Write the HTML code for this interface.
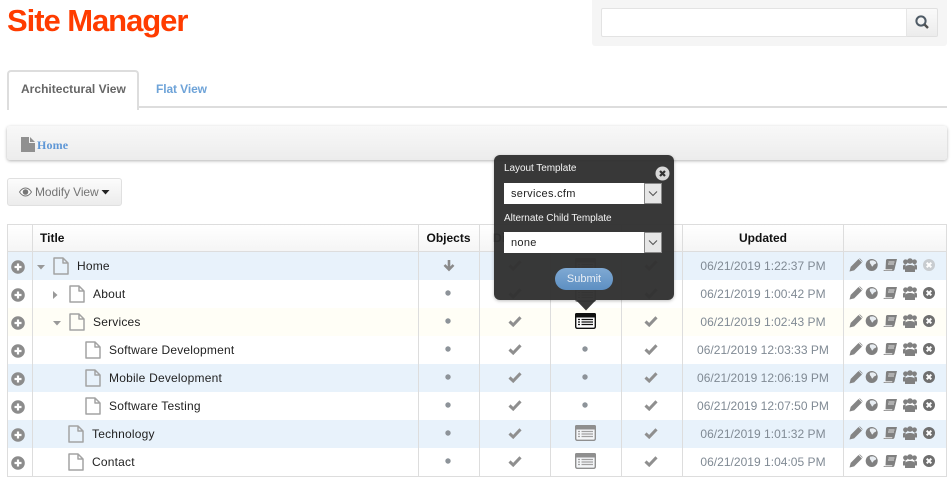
<!DOCTYPE html>
<html><head><meta charset="utf-8">
<style>
html,body{margin:0;padding:0;background:#fff;width:952px;height:485px;overflow:hidden}
body{font-family:"Liberation Sans",Arial,sans-serif;position:relative}
.a{position:absolute}
.t{position:absolute;white-space:nowrap;line-height:16px}
.row{position:absolute;left:8px;width:938px;height:28px}
.v{position:absolute;top:224px;height:252px;width:1px;background:#ddd}
.ti{font-size:12px;color:#222;letter-spacing:.2px}
.dt{font-size:12px;color:#808a94;width:160px;text-align:center;left:683px;letter-spacing:.02px}
.h{font-size:12px;font-weight:bold;color:#111;text-align:center}
svg{position:absolute;overflow:visible}
</style></head><body>
<svg width="0" height="0" style="position:absolute">
<defs>
<symbol id="plus" viewBox="0 0 14 14"><circle cx="7" cy="7" r="6.800" fill="#8c8c8c"/><path d="M7 3.500v7M3.500 7h7" stroke="#fff" stroke-width="2.200"/></symbol>
<symbol id="x" viewBox="0 0 14 14"><circle cx="7" cy="7" r="6" fill="currentColor"/><path d="M4.700 4.700l4.600 4.600M9.300 4.700l-4.600 4.600" stroke="#fff" stroke-width="2"/></symbol>
<symbol id="doc" viewBox="0 0 16 18"><path d="M1 1h9l5 5v11H1zM10 1v5h5" fill="none" stroke="#a3a3a3" stroke-width="1.500" stroke-linejoin="round"/></symbol>
<symbol id="chk" viewBox="0 0 14 12"><path d="M1.500 6.500l3.700 3.500 7.300-7.700" fill="none" stroke="#8f8f8f" stroke-width="3"/></symbol>
<symbol id="tpl" viewBox="0 0 21 16"><rect x=".7" y=".7" width="19.600" height="14.600" rx="1.500" fill="#f4f6f8" stroke="#8f8f8f" stroke-width="1.400"/><rect x="0" y="0" width="21" height="4.500" rx="1.500" fill="#8f8f8f"/><path d="M3 6.500h2M6.500 6.500h11.500M3 9h2M6.500 9h11.500M3 11.500h2M6.500 11.500h11.500" stroke="#a0a0a0" stroke-width="1.200"/></symbol>
<symbol id="tools" viewBox="0 0 76 14"><path d="M1 13l1-4 7.500-7.500 3 3L5 12zM10.500.5l3 3" fill="#858585" stroke="#858585" stroke-width=".7"/><circle cx="22.700" cy="7" r="6" fill="#808080"/><path d="M21 2.800c2.500-1 5.500-.2 6.300 2-.7 1.800-2.300 1-3 2.700-.8 1.500-1.600 1.200-2-.5-.8-1.200-2-1.800-1.300-4.200z" fill="#e8edf2"/><path d="M37 2.500c0-1 .8-1.500 1.500-1.500h9.500l-2.500 10.500c-.3 1-1 1.500-2 1.500h-9c.5-1.500 1-1.500 2-1.500z" fill="#808080"/><path d="M39.500 4h6M39 6h6M35.300 11.800h8" stroke="#fff" stroke-width=".8"/><circle cx="61" cy="3" r="2.800" fill="#808080"/><circle cx="56.500" cy="3.800" r="2.400" fill="#808080"/><circle cx="65.500" cy="3.800" r="2.400" fill="#808080"/><path d="M56 14v-4c0-2 2-3 5-3s5 1 5 3v4z" fill="#808080"/><path d="M54 11.500V8.500c0-1.500.8-2 2.800-2l-.800 5zM68 11.500V8.500c0-1.500-.8-2-2.800-2l.800 5z" fill="#808080"/></symbol>
</defs>
</svg>

<div class="t" style="left:7px;top:1px;font-size:31px;line-height:40px;font-weight:bold;color:#ff3c00;letter-spacing:-1.05px">Site Manager</div>

<div class="a" style="left:592px;top:0;width:355px;height:46px;background:#f5f5f5;border-radius:0 0 3px 3px"></div>
<div class="a" style="left:601px;top:8px;width:304px;height:27px;background:#fff;border:1px solid #e3e3e3;border-radius:2px 0 0 2px"></div>
<div class="a" style="left:906px;top:8px;width:30px;height:27px;background:linear-gradient(#fafafa,#ececec);border:1px solid #e0e0e0;border-left-color:#e6e6e6;border-radius:0 2px 2px 0"></div>
<svg style="left:914px;top:14px" width="16" height="16" viewBox="0 0 16 16"><circle cx="7" cy="7" r="4.600" fill="none" stroke="#4f5b66" stroke-width="2"/><path d="M10.500 10.500l3.500 3.500" stroke="#4f4f4f" stroke-width="2.400"/></svg>

<div class="a" style="left:7px;top:106px;width:940px;height:2px;background:#ddd"></div>
<div class="a" style="left:7px;top:70px;width:128px;height:38px;background:#fff;border:2px solid #ddd;border-bottom:0;border-radius:4px 4px 0 0"></div>
<div class="t" style="left:21px;top:81px;font-size:12px;font-weight:bold;color:#666;letter-spacing:.02px">Architectural View</div>
<div class="t" style="left:156px;top:81px;font-size:12px;font-weight:bold;color:#6ea3d8;letter-spacing:-.1px">Flat View</div>

<div class="a" style="left:7px;top:126px;width:940px;height:34px;background:linear-gradient(#f8f8f8,#ececec);border-radius:3px;box-shadow:0 1px 3px rgba(0,0,0,.3)"></div>
<svg style="left:21px;top:137px" width="14" height="15" viewBox="0 0 14 15"><path d="M0 0h8v6h6v9H0zM9 0l5 5H9z" fill="#909090"/></svg>
<div class="t" style="left:37px;top:137px;font-family:'Liberation Serif',serif;font-size:12px;font-weight:bold;color:#5f97d6;letter-spacing:.15px">Home</div>

<div class="a" style="left:7px;top:178px;width:115px;height:28px;box-sizing:border-box;background:linear-gradient(#fcfcfc,#ececec);border:1px solid #e0e0e0;border-radius:3px"></div>
<svg style="left:19px;top:187px" width="13" height="10" viewBox="0 0 13 10"><path d="M.5 5C2.500 2 4.500 1 6.500 1s4 1 6 4c-2 3-4 4-6 4S2.500 8 .5 5z" fill="#fff" stroke="#777" stroke-width="1"/><circle cx="6.500" cy="5" r="2.800" fill="#777"/></svg>
<div class="t" style="left:35px;top:184px;font-size:12px;color:#747474;letter-spacing:-.08px">Modify View</div>
<svg style="left:101px;top:190px" width="9" height="5"><path d="M.5 0h8L4.500 4.500z" fill="#222"/></svg>

<!-- table -->
<div class="a" style="left:7px;top:224px;width:940px;height:28px;box-sizing:border-box;background:linear-gradient(#fff,#f5f5f5);border-top:1px solid #ddd;border-bottom:1px solid #ddd"></div>
<div class="row" style="top:252px;background:#e8f2fb"></div>
<div class="row" style="top:280px;background:#fff"></div>
<div class="row" style="top:308px;background:#fffef6"></div>
<div class="row" style="top:336px;background:#fff"></div>
<div class="row" style="top:364px;background:#e8f2fb"></div>
<div class="row" style="top:392px;background:#fff"></div>
<div class="row" style="top:420px;background:#e8f2fb"></div>
<div class="row" style="top:448px;background:#fff"></div>
<div class="a" style="left:7px;top:476px;width:940px;height:1px;background:#ddd"></div>

<div class="v" style="left:7px"></div><div class="v" style="left:32px"></div><div class="v" style="left:418px"></div><div class="v" style="left:479px"></div><div class="v" style="left:550px"></div><div class="v" style="left:621px"></div><div class="v" style="left:682px"></div><div class="v" style="left:843px"></div><div class="v" style="left:946px"></div>

<div class="t h" style="left:40px;top:230px">Title</div>
<div class="t h" style="left:418px;width:61px;top:230px">Objects</div>
<div class="t h" style="left:479px;width:71px;top:230px">Display</div>
<div class="t h" style="left:550px;width:71px;top:230px">Template</div>
<div class="t h" style="left:621px;width:61px;top:230px">Nav</div>
<div class="t h" style="left:683px;width:160px;top:230px">Updated</div>

<!-- plus -->
<svg style="left:11px;top:260px" width="14" height="14"><use href="#plus"/></svg>
<svg style="left:11px;top:288px" width="14" height="14"><use href="#plus"/></svg>
<svg style="left:11px;top:316px" width="14" height="14"><use href="#plus"/></svg>
<svg style="left:11px;top:344px" width="14" height="14"><use href="#plus"/></svg>
<svg style="left:11px;top:372px" width="14" height="14"><use href="#plus"/></svg>
<svg style="left:11px;top:400px" width="14" height="14"><use href="#plus"/></svg>
<svg style="left:11px;top:428px" width="14" height="14"><use href="#plus"/></svg>
<svg style="left:11px;top:456px" width="14" height="14"><use href="#plus"/></svg>

<!-- carets -->
<svg style="left:37px;top:265px" width="8" height="5"><path d="M0 0h8L4 4.500z" fill="#999"/></svg>
<svg style="left:53px;top:291px" width="5" height="8"><path d="M0 0v8l4.500-4z" fill="#999"/></svg>
<svg style="left:53px;top:321px" width="8" height="5"><path d="M0 0h8L4 4.500z" fill="#999"/></svg>

<!-- docs -->
<svg style="left:53px;top:257px" width="16" height="18"><use href="#doc"/></svg>
<svg style="left:69px;top:285px" width="16" height="18"><use href="#doc"/></svg>
<svg style="left:69px;top:313px" width="16" height="18"><use href="#doc"/></svg>
<svg style="left:85px;top:341px" width="16" height="18"><use href="#doc"/></svg>
<svg style="left:85px;top:369px" width="16" height="18"><use href="#doc"/></svg>
<svg style="left:85px;top:397px" width="16" height="18"><use href="#doc"/></svg>
<svg style="left:68px;top:425px" width="16" height="18"><use href="#doc"/></svg>
<svg style="left:68px;top:453px" width="16" height="18"><use href="#doc"/></svg>

<div class="t ti" style="left:77px;top:258px">Home</div>
<div class="t ti" style="left:93px;top:286px">About</div>
<div class="t ti" style="left:93px;top:314px">Services</div>
<div class="t ti" style="left:109px;top:342px">Software Development</div>
<div class="t ti" style="left:109px;top:370px">Mobile Development</div>
<div class="t ti" style="left:109px;top:398px">Software Testing</div>
<div class="t ti" style="left:92px;top:426px">Technology</div>
<div class="t ti" style="left:92px;top:454px">Contact</div>

<!-- objects -->
<svg style="left:443px;top:259px" width="12" height="12" viewBox="0 0 12 12"><path d="M6 1v9M1.500 6L6 10.500 10.500 6" fill="none" stroke="#8a8a8a" stroke-width="2.600"/></svg>
<svg style="left:445px;top:290px" width="6" height="6"><circle cx="3" cy="3" r="2.700" fill="#8d9399"/></svg>
<svg style="left:445px;top:318px" width="6" height="6"><circle cx="3" cy="3" r="2.700" fill="#8d9399"/></svg>
<svg style="left:445px;top:346px" width="6" height="6"><circle cx="3" cy="3" r="2.700" fill="#8d9399"/></svg>
<svg style="left:445px;top:374px" width="6" height="6"><circle cx="3" cy="3" r="2.700" fill="#8d9399"/></svg>
<svg style="left:445px;top:402px" width="6" height="6"><circle cx="3" cy="3" r="2.700" fill="#8d9399"/></svg>
<svg style="left:445px;top:430px" width="6" height="6"><circle cx="3" cy="3" r="2.700" fill="#8d9399"/></svg>
<svg style="left:445px;top:458px" width="6" height="6"><circle cx="3" cy="3" r="2.700" fill="#8d9399"/></svg>

<!-- display checks -->
<svg style="left:508px;top:259px" width="14" height="12"><use href="#chk"/></svg>
<svg style="left:508px;top:287px" width="14" height="12"><use href="#chk"/></svg>
<svg style="left:508px;top:315px" width="14" height="12"><use href="#chk"/></svg>
<svg style="left:508px;top:343px" width="14" height="12"><use href="#chk"/></svg>
<svg style="left:508px;top:371px" width="14" height="12"><use href="#chk"/></svg>
<svg style="left:508px;top:399px" width="14" height="12"><use href="#chk"/></svg>
<svg style="left:508px;top:427px" width="14" height="12"><use href="#chk"/></svg>
<svg style="left:508px;top:455px" width="14" height="12"><use href="#chk"/></svg>

<!-- template -->
<svg style="left:575px;top:258px" width="21" height="16"><use href="#tpl"/></svg>
<svg style="left:575px;top:286px" width="21" height="16"><use href="#tpl"/></svg>
<svg style="left:575px;top:313px" width="21" height="16" viewBox="0 0 21 16"><rect x=".7" y=".7" width="19.600" height="14.600" rx="1.500" fill="#fff" stroke="#111" stroke-width="1.400"/><rect width="21" height="4.500" rx="1.500" fill="#111"/><path d="M3 6.500h2M6.500 6.500h11.500M3 9h2M6.500 9h11.500M3 11.500h2M6.500 11.500h11.500" stroke="#111" stroke-width="1.200"/></svg>
<svg style="left:582px;top:346px" width="6" height="6"><circle cx="3" cy="3" r="2.700" fill="#8d9399"/></svg>
<svg style="left:582px;top:374px" width="6" height="6"><circle cx="3" cy="3" r="2.700" fill="#8d9399"/></svg>
<svg style="left:582px;top:402px" width="6" height="6"><circle cx="3" cy="3" r="2.700" fill="#8d9399"/></svg>
<svg style="left:575px;top:425px" width="21" height="16"><use href="#tpl"/></svg>
<svg style="left:575px;top:453px" width="21" height="16"><use href="#tpl"/></svg>

<!-- nav checks -->
<svg style="left:644px;top:259px" width="14" height="12"><use href="#chk"/></svg>
<svg style="left:644px;top:287px" width="14" height="12"><use href="#chk"/></svg>
<svg style="left:644px;top:315px" width="14" height="12"><use href="#chk"/></svg>
<svg style="left:644px;top:343px" width="14" height="12"><use href="#chk"/></svg>
<svg style="left:644px;top:371px" width="14" height="12"><use href="#chk"/></svg>
<svg style="left:644px;top:399px" width="14" height="12"><use href="#chk"/></svg>
<svg style="left:644px;top:427px" width="14" height="12"><use href="#chk"/></svg>
<svg style="left:644px;top:455px" width="14" height="12"><use href="#chk"/></svg>

<!-- dates -->
<div class="t dt" style="top:258px">06/21/2019 1:22:37 PM</div>
<div class="t dt" style="top:286px">06/21/2019 1:00:42 PM</div>
<div class="t dt" style="top:314px">06/21/2019 1:02:43 PM</div>
<div class="t dt" style="top:342px">06/21/2019 12:03:33 PM</div>
<div class="t dt" style="top:370px">06/21/2019 12:06:19 PM</div>
<div class="t dt" style="top:398px">06/21/2019 12:07:50 PM</div>
<div class="t dt" style="top:426px">06/21/2019 1:01:32 PM</div>
<div class="t dt" style="top:454px">06/21/2019 1:04:05 PM</div>

<!-- tools -->
<svg style="left:849px;top:258px" width="76" height="14"><use href="#tools"/></svg>
<svg style="left:849px;top:286px" width="76" height="14"><use href="#tools"/></svg>
<svg style="left:849px;top:314px" width="76" height="14"><use href="#tools"/></svg>
<svg style="left:849px;top:342px" width="76" height="14"><use href="#tools"/></svg>
<svg style="left:849px;top:370px" width="76" height="14"><use href="#tools"/></svg>
<svg style="left:849px;top:398px" width="76" height="14"><use href="#tools"/></svg>
<svg style="left:849px;top:426px" width="76" height="14"><use href="#tools"/></svg>
<svg style="left:849px;top:454px" width="76" height="14"><use href="#tools"/></svg>
<svg style="left:922px;top:258px;color:#c8ccd0" width="14" height="14"><use href="#x"/></svg>
<svg style="left:922px;top:286px;color:#6f6f6f" width="14" height="14"><use href="#x"/></svg>
<svg style="left:922px;top:314px;color:#6f6f6f" width="14" height="14"><use href="#x"/></svg>
<svg style="left:922px;top:342px;color:#6f6f6f" width="14" height="14"><use href="#x"/></svg>
<svg style="left:922px;top:370px;color:#6f6f6f" width="14" height="14"><use href="#x"/></svg>
<svg style="left:922px;top:398px;color:#6f6f6f" width="14" height="14"><use href="#x"/></svg>
<svg style="left:922px;top:426px;color:#6f6f6f" width="14" height="14"><use href="#x"/></svg>
<svg style="left:922px;top:454px;color:#6f6f6f" width="14" height="14"><use href="#x"/></svg>

<!-- popover -->
<div class="a" style="left:494px;top:155px;width:180px;height:145px;background:rgba(48,48,48,.96);border-radius:6px;box-shadow:0 1px 3px rgba(0,0,0,.25)"></div>
<svg style="left:574px;top:300px" width="24" height="11"><path d="M2 0h20L12 10.500z" fill="rgba(48,48,48,.96)"/></svg>
<div class="t" style="left:504px;top:161px;font-size:10px;color:#f4f4f4;letter-spacing:-.05px">Layout Template</div>
<div class="t" style="left:504px;top:211px;font-size:10px;color:#f4f4f4;letter-spacing:-.05px">Alternate Child Template</div>
<svg style="left:655px;top:166px" width="15" height="15" viewBox="0 0 15 15"><circle cx="7.500" cy="7.500" r="7" fill="#d9d9d9"/><path d="M5 5l5 5M10 5l-5 5" stroke="#333" stroke-width="2.200"/></svg>
<div class="a" style="left:504px;top:183px;width:158px;height:21px;background:#fff"></div>
<div class="a" style="left:644px;top:183px;width:18px;height:21px;box-sizing:border-box;background:#e6e6e6;border:1px solid #888"></div>
<svg style="left:648px;top:191px" width="10" height="6"><path d="M1 .5l4 4 4-4" fill="none" stroke="#555" stroke-width="1.100"/></svg>
<div class="t" style="left:511px;top:186px;font-size:11px;color:#222;letter-spacing:.3px">services.cfm</div>
<div class="a" style="left:504px;top:232px;width:158px;height:21px;background:#fff"></div>
<div class="a" style="left:644px;top:232px;width:18px;height:21px;box-sizing:border-box;background:#e6e6e6;border:1px solid #888"></div>
<svg style="left:648px;top:240px" width="10" height="6"><path d="M1 .5l4 4 4-4" fill="none" stroke="#555" stroke-width="1.100"/></svg>
<div class="t" style="left:511px;top:235px;font-size:11px;color:#222;letter-spacing:.3px">none</div>
<div class="a" style="left:555px;top:268px;width:58px;height:22px;border-radius:11px;background:linear-gradient(#7fa9d3,#5d8fc2)"></div>
<div class="t" style="left:555px;top:271px;width:58px;text-align:center;font-size:11px;color:#e8eef5">Submit</div>
</body></html>
